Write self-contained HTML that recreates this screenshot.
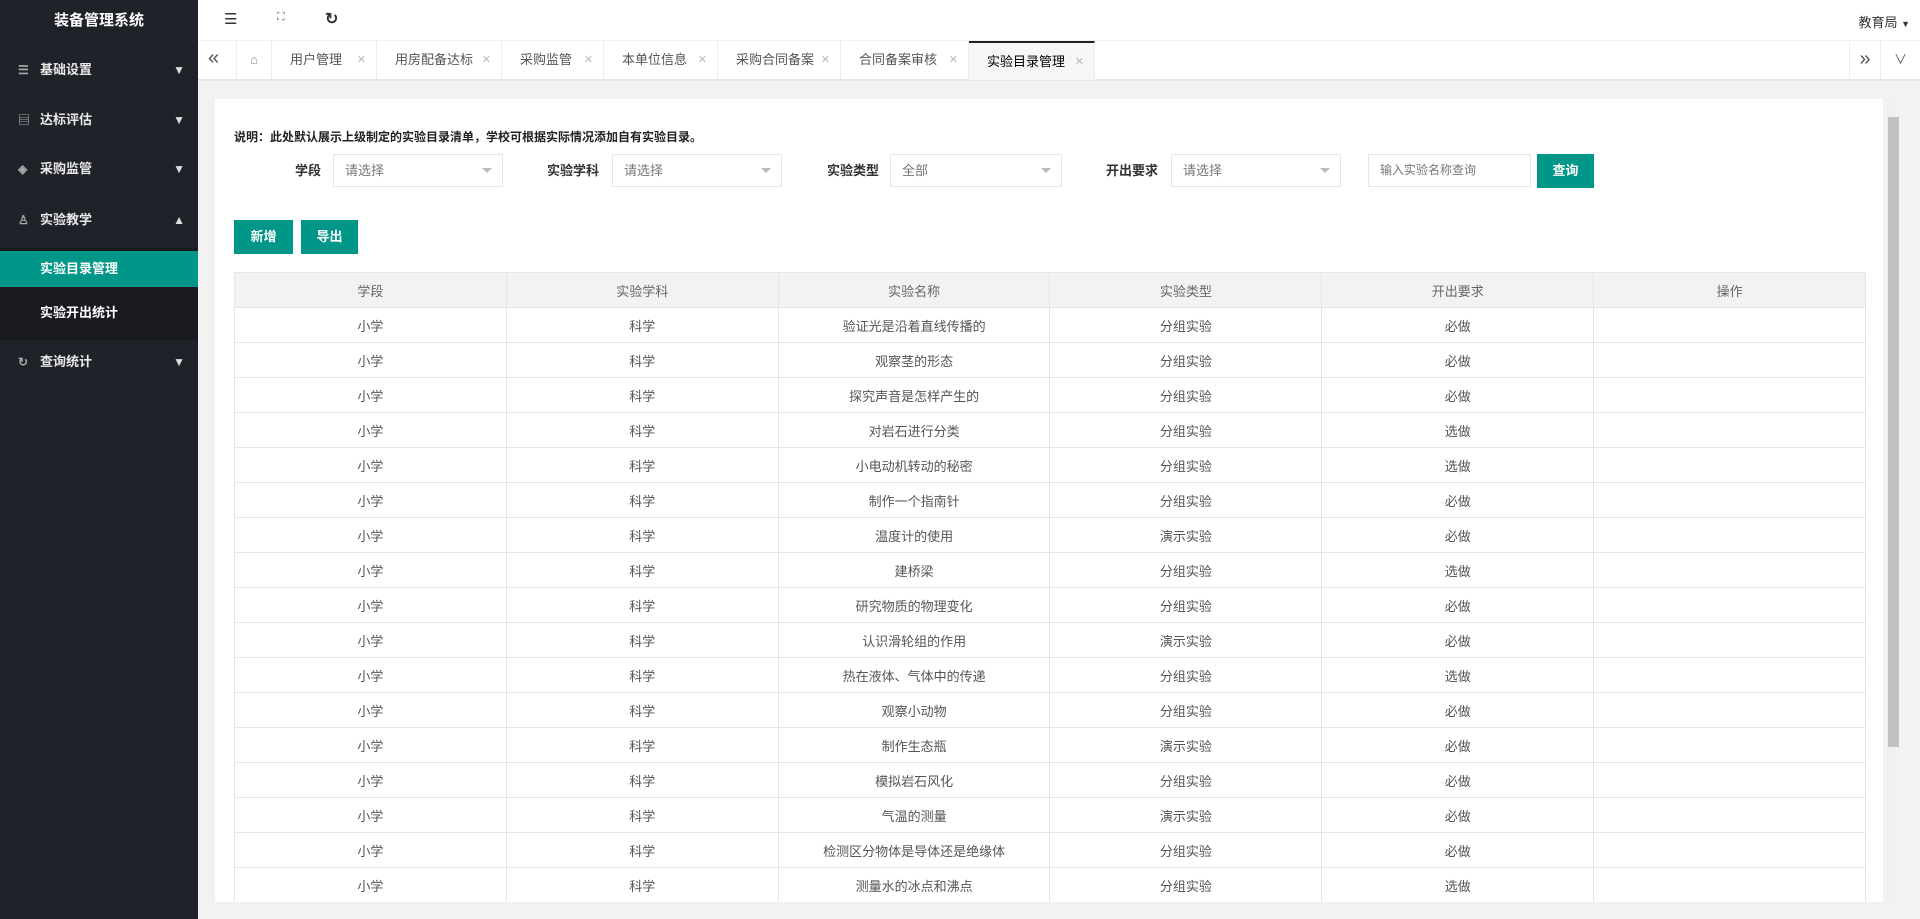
<!DOCTYPE html>
<html><head><meta charset="utf-8"><style>
*{margin:0;padding:0;box-sizing:border-box}
body{width:1920px;height:919px;overflow:hidden;font-family:"Liberation Sans","Noto Sans CJK SC",sans-serif;font-size:13px;color:#333;background:#f2f2f2;position:relative}
.side{position:absolute;left:0;top:0;width:198px;height:919px;background:#20222a;color:#fff}
.logo{height:42px;line-height:42px;text-align:center;font-size:15px;font-weight:bold}
.mi{position:absolute;left:0;width:198px;height:40px;line-height:40px;font-weight:bold;font-size:13px;color:#e8e8e8}
.mi .ic{position:absolute;left:18px;color:#aaa;font-size:12px}
.mi .t{position:absolute;left:40px}
.mi .ar{position:absolute;right:13px;top:0;font-size:12px;color:#ddd}
.sub{position:absolute;left:0;width:198px;line-height:36px;height:36px;padding-left:40px;font-weight:bold;font-size:13px}
.top{position:absolute;left:198px;top:0;right:0;height:40px;background:#fff}
.tabs{position:absolute;left:198px;top:40px;right:0;height:41px;background:#fff;border-top:1px solid #f0f0f0;border-bottom:2px solid #e6e6e6}
.tab{position:absolute;top:0;height:39px;line-height:38px;border-right:1px solid #eee;font-size:13px;color:#555;padding-left:18px}
.tab .x{position:absolute;right:10px;color:#bbb;font-size:11px}
.card{position:absolute;left:215px;top:99px;width:1668px;height:803px;background:#fff}
.lbl{position:absolute;top:154px;line-height:33px;font-weight:bold;font-size:13px;color:#333}
.sel{position:absolute;top:154px;height:33px;border:1px solid #e6e6e6;line-height:31px;padding-left:11px;color:#777;font-size:13px}
.dd:after{content:"";position:absolute;right:10px;top:13px;border:5px solid transparent;border-top-color:#bbb}
.btn{position:absolute;background:#009688;color:#fff;font-weight:bold;text-align:center;font-size:13px}
table{position:absolute;left:234px;top:272px;width:1632px;border-collapse:collapse;table-layout:fixed}
td,th{border:1px solid #e6e6e6;height:35px;text-align:center;font-weight:normal;color:#555;font-size:13px}
th{background:#f2f2f2;color:#666}
</style></head><body>
<div class="side">
<div class="logo">装备管理系统</div>
<div class="mi" style="top:50px"><span class="ic">☰</span><span class="t">基础设置</span><span class="ar">▼</span></div>
<div class="mi" style="top:100px"><span class="ic">▤</span><span class="t">达标评估</span><span class="ar">▼</span></div>
<div class="mi" style="top:149px"><span class="ic">◈</span><span class="t">采购监管</span><span class="ar">▼</span></div>
<div class="mi" style="top:200px"><span class="ic">♙</span><span class="t">实验教学</span><span class="ar">▲</span></div>
<div style="position:absolute;top:248px;left:0;width:198px;height:92px;background:#191a20"></div>
<div class="sub" style="top:251px;background:#009688">实验目录管理</div>
<div class="sub" style="top:295px">实验开出统计</div>
<div class="mi" style="top:342px"><span class="ic">↻</span><span class="t">查询统计</span><span class="ar">▼</span></div>
</div>
<div class="top">
<span style="position:absolute;left:26px;top:10px;font-size:15px">☰</span>
<span style="position:absolute;left:79px;top:11px;font-size:11px;color:#666">⛶</span>
<span style="position:absolute;left:127px;top:9px;font-size:16px;font-weight:bold">↻</span>
<span style="position:absolute;right:10px;top:12px;font-size:13px">教育局 <span style="font-size:9px">▼</span></span>
</div>
<div class="tabs">
<span style="position:absolute;left:10px;top:6px;font-size:20px;color:#555">«</span>
<div style="position:absolute;left:38px;top:0;width:36px;height:39px;border-left:1px solid #eee;border-right:1px solid #eee;text-align:center;line-height:38px;color:#888">⌂</div>
<div class="tab" style="left:74px;width:105px">用户管理<span class="x">✕</span></div>
<div class="tab" style="left:179px;width:125px">用房配备达标<span class="x">✕</span></div>
<div class="tab" style="left:304px;width:102px">采购监管<span class="x">✕</span></div>
<div class="tab" style="left:406px;width:114px">本单位信息<span class="x">✕</span></div>
<div class="tab" style="left:520px;width:123px">采购合同备案<span class="x">✕</span></div>
<div class="tab" style="left:643px;width:128px">合同备案审核<span class="x">✕</span></div>
<div class="tab" style="left:771px;width:126px;background:#f6f6f6;border-top:2px solid #222;color:#000">实验目录管理<span class="x">✕</span></div>
<div style="position:absolute;right:40px;top:0;width:31px;height:39px;border-left:1px solid #eee;text-align:center;line-height:36px;font-size:20px;color:#555">»</div>
<div style="position:absolute;right:0;top:0;width:40px;height:39px;border-left:1px solid #eee;text-align:center;line-height:38px;color:#555">∨</div>
</div>
<div class="card"></div>
<div style="position:absolute;left:1887px;top:99px;width:13px;height:803px;background:#f1f1f1"><div style="position:absolute;left:1px;top:18px;width:11px;height:630px;background:#c1c1c1"></div></div>
<div style="position:absolute;left:234px;top:128px;font-weight:bold;font-size:12px;color:#222">说明：此处默认展示上级制定的实验目录清单，学校可根据实际情况添加自有实验目录。</div>
<div class="lbl" style="left:295px">学段</div><div class="sel dd" style="left:333px;width:170px">请选择</div>
<div class="lbl" style="left:547px">实验学科</div><div class="sel dd" style="left:612px;width:170px">请选择</div>
<div class="lbl" style="left:827px">实验类型</div><div class="sel dd" style="left:890px;width:172px">全部</div>
<div class="lbl" style="left:1106px">开出要求</div><div class="sel dd" style="left:1171px;width:170px">请选择</div>
<div class="sel" style="left:1368px;width:163px;font-size:12px">输入实验名称查询</div>
<div class="btn" style="left:1537px;top:154px;width:57px;height:34px;line-height:34px">查询</div>
<div class="btn" style="left:234px;top:220px;width:59px;height:34px;line-height:34px">新增</div>
<div class="btn" style="left:301px;top:220px;width:57px;height:34px;line-height:34px">导出</div>
<table>
<tr><th>学段</th><th>实验学科</th><th>实验名称</th><th>实验类型</th><th>开出要求</th><th>操作</th></tr>
<tr><td>小学</td><td>科学</td><td>验证光是沿着直线传播的</td><td>分组实验</td><td>必做</td><td></td></tr>
<tr><td>小学</td><td>科学</td><td>观察茎的形态</td><td>分组实验</td><td>必做</td><td></td></tr>
<tr><td>小学</td><td>科学</td><td>探究声音是怎样产生的</td><td>分组实验</td><td>必做</td><td></td></tr>
<tr><td>小学</td><td>科学</td><td>对岩石进行分类</td><td>分组实验</td><td>选做</td><td></td></tr>
<tr><td>小学</td><td>科学</td><td>小电动机转动的秘密</td><td>分组实验</td><td>选做</td><td></td></tr>
<tr><td>小学</td><td>科学</td><td>制作一个指南针</td><td>分组实验</td><td>必做</td><td></td></tr>
<tr><td>小学</td><td>科学</td><td>温度计的使用</td><td>演示实验</td><td>必做</td><td></td></tr>
<tr><td>小学</td><td>科学</td><td>建桥梁</td><td>分组实验</td><td>选做</td><td></td></tr>
<tr><td>小学</td><td>科学</td><td>研究物质的物理变化</td><td>分组实验</td><td>必做</td><td></td></tr>
<tr><td>小学</td><td>科学</td><td>认识滑轮组的作用</td><td>演示实验</td><td>必做</td><td></td></tr>
<tr><td>小学</td><td>科学</td><td>热在液体、气体中的传递</td><td>分组实验</td><td>选做</td><td></td></tr>
<tr><td>小学</td><td>科学</td><td>观察小动物</td><td>分组实验</td><td>必做</td><td></td></tr>
<tr><td>小学</td><td>科学</td><td>制作生态瓶</td><td>演示实验</td><td>必做</td><td></td></tr>
<tr><td>小学</td><td>科学</td><td>模拟岩石风化</td><td>分组实验</td><td>必做</td><td></td></tr>
<tr><td>小学</td><td>科学</td><td>气温的测量</td><td>演示实验</td><td>必做</td><td></td></tr>
<tr><td>小学</td><td>科学</td><td>检测区分物体是导体还是绝缘体</td><td>分组实验</td><td>必做</td><td></td></tr>
<tr><td>小学</td><td>科学</td><td>测量水的冰点和沸点</td><td>分组实验</td><td>选做</td><td></td></tr>
</table>
<div style="position:absolute;left:198px;top:902px;width:1722px;height:17px;background:#f2f2f2"></div>
</body></html>
